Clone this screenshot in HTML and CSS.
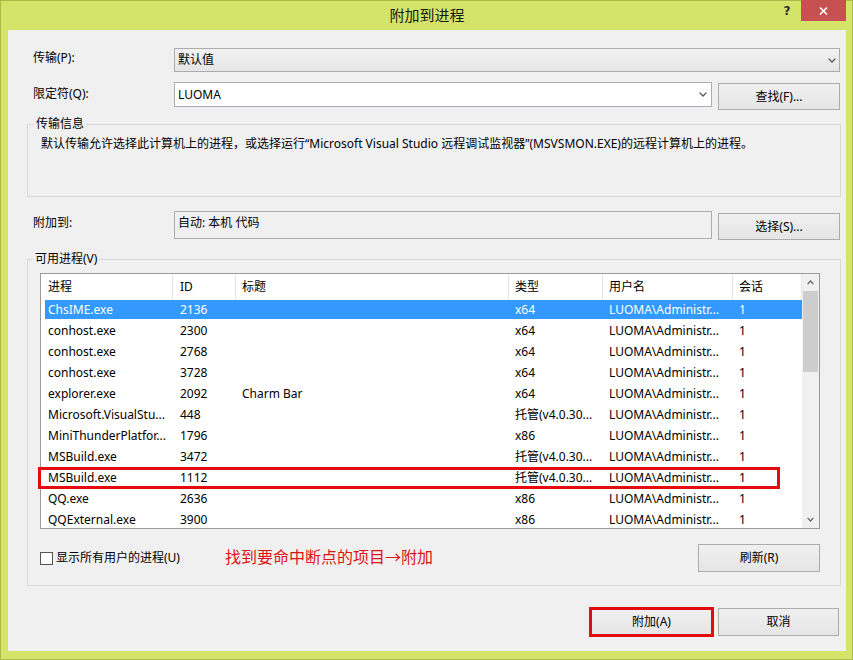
FILE: index.html
```html
<!DOCTYPE html>
<html lang="zh-CN">
<head>
<meta charset="utf-8">
<title>附加到进程</title>
<link rel="stylesheet" href="styles.css">
</head>
<body>
<div class="window">
  <div class="titlebar">
    <div class="tb-left"></div>
    <div class="title">附加到进程</div>
    <div class="caption-btns">
      <span class="help">?</span>
      <span class="close"><svg width="9" height="8" viewBox="0 0 9 8"><path d="M1 0.5 L8 7.5 M8 0.5 L1 7.5" stroke="#ffffff" stroke-width="1.6" fill="none"/></svg></span>
    </div>
  </div>
  <div class="client">
    <div class="form-row row-transport">
      <span class="lbl">传输(P):</span>
      <div class="combo combo-ro span2"><span>默认值</span><svg width="8" height="5" viewBox="0 0 8 5"><path d="M0.6 0.6 L4 4 L7.4 0.6" fill="none" stroke="#555" stroke-width="1.3"/></svg></div>
    </div>
    <div class="form-row row-qual">
      <span class="lbl">限定符(Q):</span>
      <div class="combo combo-edit"><span>LUOMA</span><svg width="8" height="5" viewBox="0 0 8 5"><path d="M0.6 0.6 L4 4 L7.4 0.6" fill="none" stroke="#555" stroke-width="1.3"/></svg></div>
      <button class="btn btn-side">查找(F)...</button>
    </div>
    <fieldset class="group group-info">
      <legend>传输信息</legend>
      <div class="info-text">默认传输允许选择此计算机上的进程，或选择运行“Microsoft Visual Studio 远程调试监视器”(MSVSMON.EXE)的远程计算机上的进程。</div>
    </fieldset>
    <div class="form-row row-attach">
      <span class="lbl">附加到:</span>
      <div class="field">自动: 本机 代码</div>
      <button class="btn btn-side btn-sel">选择(S)...</button>
    </div>
    <fieldset class="group group-procs">
      <legend>可用进程(V)</legend>
      <div class="listview">
        <div class="lv-main">
          <div class="lv-row lv-header">
            <span class="c1">进程</span><span class="c2">ID</span><span>标题</span><span>类型</span><span>用户名</span><span>会话</span>
          </div>
          <div class="lv-body">
            <div class="lv-row sel"><span class="c1">ChsIME.exe</span><span class="c2">2136</span><span></span><span>x64</span><span>LUOMA\Administr...</span><span>1</span></div>
            <div class="lv-row"><span class="c1">conhost.exe</span><span class="c2">2300</span><span></span><span>x64</span><span>LUOMA\Administr...</span><span>1</span></div>
            <div class="lv-row"><span class="c1">conhost.exe</span><span class="c2">2768</span><span></span><span>x64</span><span>LUOMA\Administr...</span><span>1</span></div>
            <div class="lv-row"><span class="c1">conhost.exe</span><span class="c2">3728</span><span></span><span>x64</span><span>LUOMA\Administr...</span><span>1</span></div>
            <div class="lv-row"><span class="c1">explorer.exe</span><span class="c2">2092</span><span>Charm Bar</span><span>x64</span><span>LUOMA\Administr...</span><span>1</span></div>
            <div class="lv-row"><span class="c1">Microsoft.VisualStu...</span><span class="c2">448</span><span></span><span>托管(v4.0.30...</span><span>LUOMA\Administr...</span><span>1</span></div>
            <div class="lv-row"><span class="c1">MiniThunderPlatfor...</span><span class="c2">1796</span><span></span><span>x86</span><span>LUOMA\Administr...</span><span>1</span></div>
            <div class="lv-row"><span class="c1">MSBuild.exe</span><span class="c2">3472</span><span></span><span>托管(v4.0.30...</span><span>LUOMA\Administr...</span><span>1</span></div>
            <div class="lv-row"><span class="c1">MSBuild.exe</span><span class="c2">1112</span><span></span><span>托管(v4.0.30...</span><span>LUOMA\Administr...</span><span>1</span></div>
            <div class="lv-row"><span class="c1">QQ.exe</span><span class="c2">2636</span><span></span><span>x86</span><span>LUOMA\Administr...</span><span>1</span></div>
            <div class="lv-row"><span class="c1">QQExternal.exe</span><span class="c2">3900</span><span></span><span>x86</span><span>LUOMA\Administr...</span><span>1</span></div>
          </div>
        </div>
        <div class="scrollbar">
          <div class="sb-btn"><svg width="7" height="5" viewBox="0 0 7 5"><path d="M0.6 4.2 L3.5 1 L6.4 4.2" fill="none" stroke="#606060" stroke-width="1.2"/></svg></div>
          <div class="sb-track"><div class="sb-thumb"></div></div>
          <div class="sb-btn"><svg width="7" height="5" viewBox="0 0 7 5"><path d="M0.6 0.8 L3.5 4 L6.4 0.8" fill="none" stroke="#606060" stroke-width="1.2"/></svg></div>
        </div>
        <div class="mark"></div>
      </div>
      <div class="procs-footer">
        <label class="check"><span class="box"></span>显示所有用户的进程(U)</label>
        <span class="annot">找到要命中断点的项目→附加</span>
        <button class="btn btn-refresh">刷新(R)</button>
      </div>
    </fieldset>
    <div class="footer">
      <button class="btn btn-attach">附加(A)</button>
      <button class="btn btn-cancel">取消</button>
    </div>
  </div>
</div>
</body>
</html>
```
FILE: styles.css
```css
* { box-sizing: border-box; }
html, body { margin: 0; padding: 0; }
body {
  width: 853px;
  height: 660px;
  overflow: hidden;
  font: 12px/16px "Noto Sans", "Noto Sans CJK SC", sans-serif;
  color: #000;
  background: #d3e468;
}
.window {
  width: 853px;
  height: 660px;
  background: #d3e468;
  border: 1px solid #a9b94c;
  padding: 0 6px 0 7px;
  display: flex;
  flex-direction: column;
}
.titlebar {
  height: 29px;
  display: grid;
  grid-template-columns: 1fr auto 1fr;
  align-items: start;
}
.title {
  font-size: 15px;
  line-height: 29px;
  color: #1a1a1a;
}
.caption-btns {
  justify-self: end;
  display: flex;
  margin-top: -1px;
}
.help {
  width: 28px;
  height: 21px;
  font-weight: bold;
  font-size: 12px;
  line-height: 22px;
  text-align: center;
  color: #2a2a2a;
  font-family: "DejaVu Sans", sans-serif;
}
.close {
  width: 45px;
  height: 21px;
  background: #c75050;
  display: flex;
  align-items: center;
  justify-content: center;
}
.client {
  height: 621px;
  background: #f0f0f0;
  padding: 0 5px 0 19px;
  display: flex;
  flex-direction: column;
}
.form-row {
  display: grid;
  grid-template-columns: 135px 538px 122px;
  column-gap: 6px;
  padding-left: 6px;
  align-items: start;
}
.row-transport { margin-top: 18px; }
.row-transport .lbl { padding-top: 2px; }
.row-qual { margin-top: 10px; }
.row-qual .lbl { padding-top: 4px; }
.row-attach { margin-top: 14px; }
.row-attach .lbl { padding-top: 4px; }
.span2 { grid-column: 2 / 4; }
.combo {
  display: flex;
  align-items: center;
  justify-content: space-between;
  padding: 0 3px 0 3px;
  border: 1px solid #acacac;
}
.combo-ro {
  height: 24px;
  background: linear-gradient(#f2f2f2, #e5e5e5);
}
.combo-edit {
  height: 25px;
  background: #fff;
  border-color: #abadb3;
  padding-right: 4px;
}
.btn {
  font: inherit;
  color: #000;
  border: 1px solid #acacac;
  background: linear-gradient(#f0f0f0, #e5e5e5);
  height: 27px;
  padding: 0;
  margin: 0;
  text-align: center;
}
.btn-side { margin-top: 1px; width: 122px; }
.btn-sel { margin-top: 2px; }
.field {
  height: 28px;
  border: 1px solid #adadad;
  background: #f0f0f0;
  padding: 3px 3px 0;
}
.group {
  margin: 0;
  border: 1px solid #d9d9d9;
  min-width: 0;
}
.group legend {
  padding: 0 2px;
  margin-left: -7px;
  line-height: 16px;
}
.group-info {
  margin-top: 6px;
  padding: 4px 13px 0 13px;
}
.info-text {
  height: 60px;
  white-space: nowrap;
}
.group-procs {
  margin-top: 11px;
  padding: 6px 20px 13px 12px;
}
.listview {
  height: 256px;
  border: 1px solid #9a9a9a;
  background: #fff;
  display: flex;
  position: relative;
}
.lv-main {
  flex: 1;
  min-width: 0;
  overflow: hidden;
}
.lv-row {
  display: grid;
  grid-template-columns: 132px 63px 273px 94px 130px 69px;
  height: 21px;
  line-height: 21px;
  white-space: nowrap;
}
.lv-row span {
  padding-left: 6px;
  overflow: hidden;
}
.lv-row .c1, .lv-row .c2 { padding-left: 7px; }
.lv-header {
  height: 25px;
  line-height: 25px;
}
.lv-header span { border-right: 1px solid #e5e5e5; }
.lv-body {
  height: 229px;
  overflow: hidden;
}
.lv-row.sel {
  color: #fff;
  background: linear-gradient(#3399ff, #3399ff) 4px 1px / calc(100% - 4px) 19px no-repeat;
}
.scrollbar {
  width: 17px;
  background: #f0f0f0;
  display: flex;
  flex-direction: column;
}
.sb-btn {
  height: 17px;
  display: flex;
  align-items: center;
  justify-content: center;
}
.sb-track { flex: 1; }
.sb-thumb {
  height: 81px;
  margin: 0 1px;
  background: #cdcdcd;
}
.mark {
  position: absolute;
  left: -3px;
  top: 193px;
  width: 742px;
  height: 22px;
  border: 3px solid #e30b0b;
}
.procs-footer {
  margin-top: 15px;
  height: 28px;
  display: flex;
  align-items: center;
}
.check {
  display: flex;
  align-items: center;
}
.box {
  width: 13px;
  height: 13px;
  border: 1px solid #555;
  background: #fff;
  margin-right: 3px;
}
.annot {
  margin-left: 45px;
  margin-bottom: 4px;
  font-size: 16px;
  line-height: 20px;
  color: #dc1414;
  font-family: "Noto Sans CJK SC", sans-serif;
}
.btn-refresh {
  margin-left: auto;
  width: 122px;
  height: 28px;
}
.footer {
  margin-top: 21px;
  display: flex;
  justify-content: flex-end;
  align-items: center;
  gap: 4px;
  padding-right: 2px;
}
.btn-attach {
  width: 125px;
  height: 30px;
  border: 3px solid #e30b0b;
}
.btn-cancel {
  width: 121px;
  height: 28px;
}
```
